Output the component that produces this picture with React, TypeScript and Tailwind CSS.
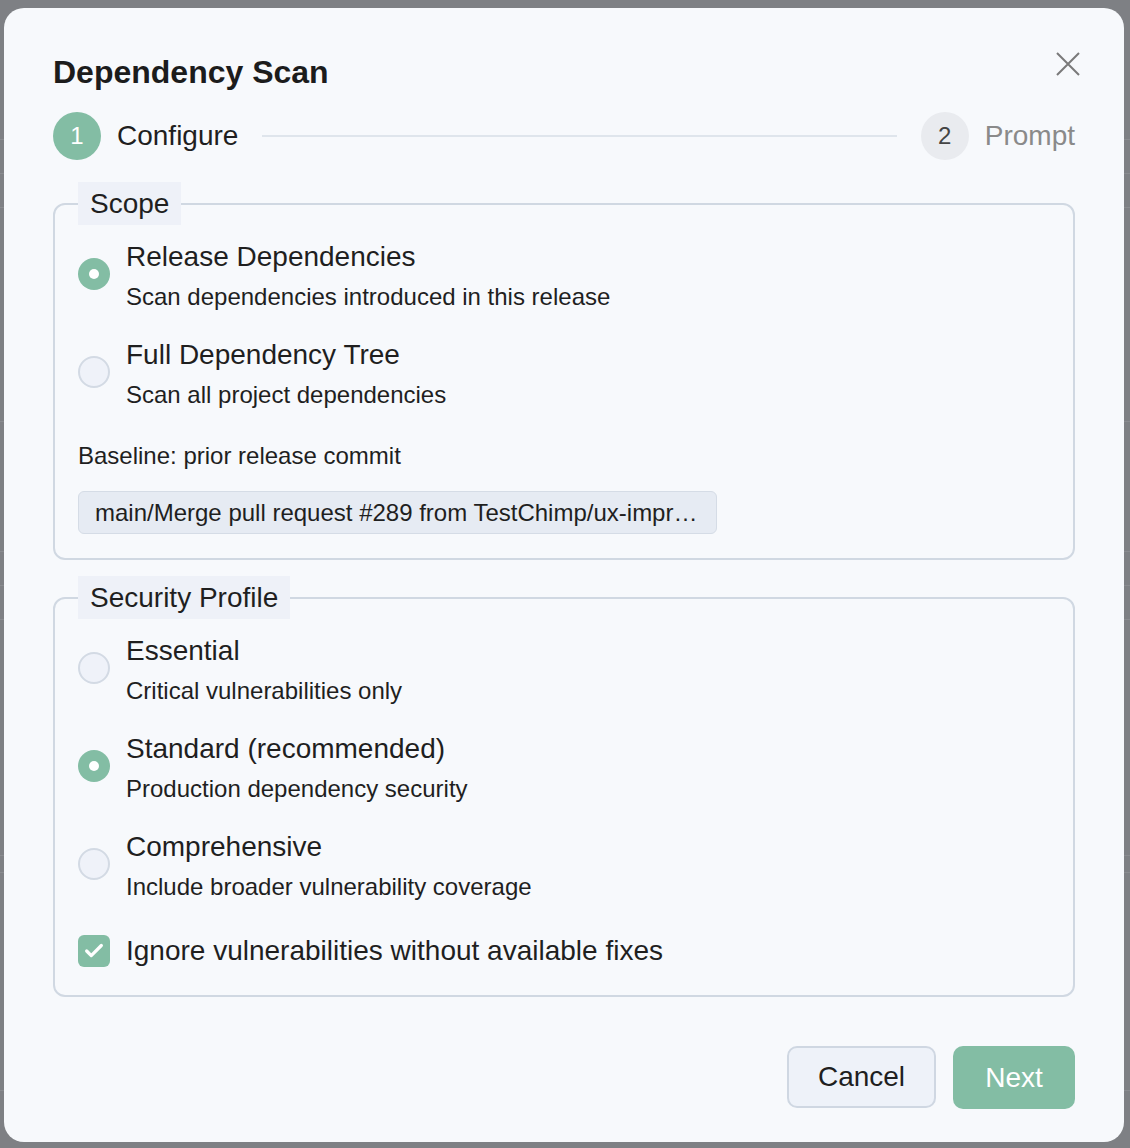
import { Check } from 'lucide-react'

const font = { fontFamily: '"Liberation Sans", Arial, sans-serif' }

const backdropLines = [139, 173, 207, 421, 551, 585, 619, 855, 872, 1090]

function Radio({ checked }: { checked: boolean }) {
  return checked ? (
    <span className="mt-[21px] flex h-8 w-8 shrink-0 items-center justify-center rounded-full bg-[#83bda4]">
      <span className="h-[10px] w-[10px] rounded-full bg-white" />
    </span>
  ) : (
    <span className="mt-[21px] h-8 w-8 shrink-0 rounded-full border-2 border-[#d3dae4] bg-[#eff2f9]" />
  )
}

function Option({ title, desc, checked }: { title: string; desc: string; checked: boolean }) {
  return (
    <div className="flex gap-4">
      <Radio checked={checked} />
      <div className="flex flex-col">
        <span className="text-[28px] leading-[40px] text-[#1f1f1f]">{title}</span>
        <span className="text-[24px] leading-[40px] text-[#1f1f1f]">{desc}</span>
      </div>
    </div>
  )
}

function Section({ label, children }: { label: string; children: React.ReactNode }) {
  return (
    <fieldset className="rounded-[12px] border-2 border-[#d0d8e2] px-[23px] pt-[12px] pb-[24px]">
      <legend className="h-[43px] bg-[#eef1f8] px-[12px] text-[28px] leading-[43px] text-[#1f1f1f]">
        {label}
      </legend>
      {children}
    </fieldset>
  )
}

export default function App() {
  return (
    <div className="relative h-[1148px] w-[1130px] overflow-hidden bg-[#7e8084] pl-[4px] pt-[8px]" style={font}>
      {/* page under the overlay */}
      {backdropLines.map((y) => (
        <div key={y} className="absolute left-0 h-px w-full bg-[#8a8c90]" style={{ top: y }} />
      ))}

      <div className="relative flex h-[1134px] w-[1120px] flex-col rounded-[20px] bg-[#f7f9fc] px-[49px] pt-[44px] pb-[33px]">
        {/* Header */}
        <div className="flex items-start justify-between">
          <h2 className="text-[32px] font-bold leading-[40px] text-[#1c1c1c]">Dependency Scan</h2>
          <button className="-mr-[5px] text-[#7a7a7a]">
            <svg width="24" height="24" viewBox="0 0 24 24" fill="none" stroke="currentColor" strokeWidth="2">
              <path d="M1 1L23 23M23 1L1 23" />
            </svg>
          </button>
        </div>

        {/* Stepper */}
        <div className="mt-[20px] flex h-12 items-center">
          <span className="flex h-12 w-12 items-center justify-center rounded-full bg-[#83bda4] text-[24px] text-white">
            1
          </span>
          <span className="ml-4 text-[28px] text-[#1f1f1f]">Configure</span>
          <div className="ml-6 mr-[24px] h-[2px] flex-1 bg-[#dfe5ec]" />
          <span className="flex h-12 w-12 items-center justify-center rounded-full bg-[#e9ebef] text-[24px] text-[#444]">
            2
          </span>
          <span className="ml-[16px] text-[28px] text-[#8a8a8a]">Prompt</span>
        </div>

        <div className="mt-[22px] flex flex-col gap-[16px]">
          <Section label="Scope">
            <div className="flex flex-col gap-[18px]">
              <Option title="Release Dependencies" desc="Scan dependencies introduced in this release" checked />
              <Option title="Full Dependency Tree" desc="Scan all project dependencies" checked={false} />
            </div>
            <p className="mt-[21px] text-[24px] leading-[40px] text-[#1f1f1f]">Baseline: prior release commit</p>
            <div className="mt-[15px] h-[43px] w-[639px] whitespace-nowrap rounded-[6px] border border-[#d5dce6] bg-[#e6ebf3] px-4 text-[24px] leading-[41px] text-[#1f1f1f]">
              main/Merge pull request #289 from TestChimp/ux-impr…
            </div>
          </Section>

          <Section label="Security Profile">
            <div className="flex flex-col gap-[18px]">
              <Option title="Essential" desc="Critical vulnerabilities only" checked={false} />
              <Option title="Standard (recommended)" desc="Production dependency security" checked />
              <Option title="Comprehensive" desc="Include broader vulnerability coverage" checked={false} />
            </div>
            <label className="mt-[24px] flex items-center gap-4">
              <span className="flex h-8 w-8 shrink-0 items-center justify-center rounded-[6px] bg-[#83bda4]">
                <Check className="h-[22px] w-[22px] text-white" strokeWidth={3.5} />
              </span>
              <span className="text-[28px] leading-[40px] text-[#1f1f1f]">Ignore vulnerabilities without available fixes</span>
            </label>
          </Section>
        </div>

        {/* Footer */}
        <div className="mt-auto flex justify-end gap-[17px]">
          <button className="h-[62px] w-[149px] rounded-[10px] border-2 border-[#cfd7e2] bg-[#eef2f9] text-[28px] text-[#1f1f1f]">
            Cancel
          </button>
          <button className="h-[63px] w-[122px] rounded-[10px] bg-[#83bda4] text-[28px] text-white">Next</button>
        </div>
      </div>
    </div>
  )
}
